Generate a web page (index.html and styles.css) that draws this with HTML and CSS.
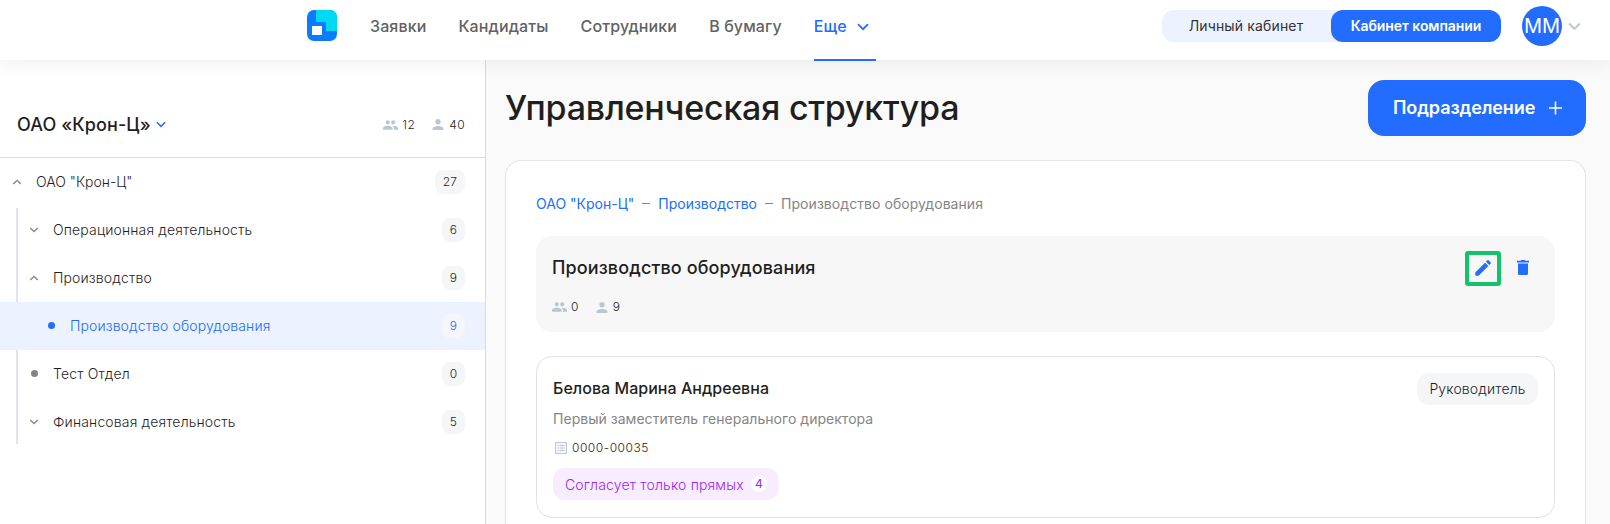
FILE: index.html
```html
<!DOCTYPE html>
<html lang="ru">
<head>
<meta charset="utf-8">
<title>Управленческая структура</title>
<link rel="stylesheet" href="styles.css">
</head>
<body>
<svg class="defs" width="0" height="0">
  <symbol id="down" viewBox="0 0 12 8"><path d="M1 1.2 6 6.2 11 1.2" fill="none" stroke="currentColor" stroke-width="1.8"/></symbol>
  <symbol id="group" viewBox="1 5 22 14"><path d="M16 11c1.66 0 2.99-1.34 2.99-3S17.66 5 16 5s-3 1.34-3 3 1.34 3 3 3zm-8 0c1.66 0 2.99-1.34 2.99-3S9.66 5 8 5 5 6.34 5 8s1.34 3 3 3zm0 2c-2.33 0-7 1.17-7 3.5V19h14v-2.5c0-2.33-4.67-3.5-7-3.5zm8 0c-.29 0-.62.02-.97.05 1.16.84 1.97 1.97 1.97 3.45V19h6v-2.5c0-2.33-4.67-3.5-7-3.5z" fill="currentColor"/></symbol>
  <symbol id="person" viewBox="4 4 16 16"><path d="M12 12c2.21 0 4-1.79 4-4s-1.79-4-4-4-4 1.79-4 4 1.790 4 4 4zm0 2c-2.67 0-8 1.340-8 4v2h16v-2c0-2.660-5.330-4-8-4z" fill="currentColor"/></symbol>
</svg>
<header class="header">
  <svg class="logo" viewBox="0 0 30 31"><rect width="30" height="31" rx="7" fill="#0a7aff"/><path d="M9 0h14a7 7 0 0 1 7 7v14H19v-9H9z" fill="#00d9f2"/><rect x="5" y="16" width="10" height="9" fill="#fff"/></svg>
  <nav class="nav">
    <a>Заявки</a><a>Кандидаты</a><a>Сотрудники</a><a>В бумагу</a>
    <a class="active">Еще <svg class="nav-chevron"><use href="#down"/></svg></a>
  </nav>
  <div class="switch"><span class="personal">Личный кабинет</span><span class="company">Кабинет компании</span></div>
  <div class="avatar">ММ</div>
  <svg class="user-chevron"><use href="#down"/></svg>
</header>
<div class="layout">
  <aside class="sidebar">
    <div class="side-head">
      <h2>ОАО «Крон-Ц»</h2><svg class="title-chevron"><use href="#down"/></svg>
      <div class="stats"><svg class="group"><use href="#group"/></svg><span>12</span><svg class="person"><use href="#person"/></svg><span>40</span></div>
    </div>
    <div class="row root"><span class="mark"><svg class="up"><use href="#down"/></svg></span><span class="name">ОАО "Крон-Ц"</span><span class="badge">27</span></div>
    <div class="tree">
      <div class="row"><span class="mark"><svg><use href="#down"/></svg></span><span class="name">Операционная деятельность</span><span class="badge">6</span></div>
      <div class="row"><span class="mark"><svg class="up"><use href="#down"/></svg></span><span class="name">Производство</span><span class="badge">9</span></div>
      <div class="row selected"><span class="mark"><i></i></span><span class="name">Производство оборудования</span><span class="badge">9</span></div>
      <div class="row"><span class="mark"><i></i></span><span class="name">Тест Отдел</span><span class="badge">0</span></div>
      <div class="row last"><span class="mark"><svg><use href="#down"/></svg></span><span class="name">Финансовая деятельность</span><span class="badge">5</span></div>
    </div>
  </aside>
  <main class="main">
    <div class="page-head">
      <h1>Управленческая структура</h1>
      <button class="add">Подразделение<svg viewBox="0 0 14 14"><path d="M7 0v14M0 7h14" stroke="#fff" stroke-width="1.7"/></svg></button>
    </div>
    <section class="panel">
      <div class="crumbs"><a>ОАО "Крон-Ц"</a><i></i><a>Производство</a><i></i><span>Производство оборудования</span></div>
      <div class="unit">
        <div>
          <h3>Производство оборудования</h3>
          <div class="stats"><svg class="group"><use href="#group"/></svg><span>0</span><svg class="person"><use href="#person"/></svg><span>9</span></div>
        </div>
        <div class="actions">
          <span class="edit"><svg viewBox="3 3 18 18"><path d="M3.600 16.700 14.300 6l3.700 3.700L7.300 20.400Q7 20.700 6.500 20.700H4.200q-.9 0-.9-.9v-2.300q0-.5.3-.8zM20.500 7.200c.5-.5.5-1.200 0-1.700l-2-2c-.5-.5-1.200-.5-1.700 0l-1.500 1.500 3.700 3.700z" fill="currentColor"/></svg></span>
          <svg class="trash" viewBox="0 0 12 15"><path d="M1 3.500h10v10q0 1.500-1.500 1.500h-7Q1 15 1 13.500zM0 .800h3.500L4.300 0h3.400l.8.800H12v1.600H0z" fill="currentColor"/></svg>
        </div>
      </div>
      <article class="employee">
        <div class="employee-head"><h4>Белова Марина Андреевна</h4><span class="role">Руководитель</span></div>
        <p class="position">Первый заместитель генерального директора</p>
        <div class="number"><svg viewBox="0 0 12 12"><path d="M.5.500h11v11H.5z" fill="#f3f6fa" stroke="#b8c6d5"/><path d="M2.500 3.500h1m1 0h5m-7 2.500h1m1 0h5m-7 2.500h1m1 0h5" stroke="#b8c6d5"/></svg>0000-00035</div>
        <div class="approval">Согласует только прямых<b>4</b></div>
      </article>
    </section>
  </main>
</div>
</body>
</html>
```
FILE: styles.css
```css
* { box-sizing: border-box; }
body { margin: 0; height: 524px; overflow: hidden; background: #fff; color: #1f1f1f; font-family: Inter, sans-serif; font-size: 14px; }
h1, h2, h3, h4, p { margin: 0; font-weight: 500; }
svg { display: block; flex: none; }
.defs { position: absolute; }

.header { position: relative; z-index: 1; display: flex; align-items: flex-start; height: 60px; padding: 0 29px 0 307px; background: #fff; box-shadow: 0 0 20px 2px rgba(0,0,0,.07); }
.logo { width: 30px; height: 31px; margin: 10px 33px 0 0; }
.nav { display: flex; gap: 32px; height: 61px; color: #626262; font-size: 16px; font-weight: 500; line-height: 52px; letter-spacing: .12px; white-space: nowrap; }
.active { display: flex; width: 62px; color: #226dff; border-bottom: 2px solid #226dff; }
.nav-chevron { width: 12px; height: 8px; margin: 23px 0 0 10px; }
.switch { display: flex; margin: 10px 0 0 auto; width: 339px; height: 32px; border-radius: 12px; background: #ecf2ff; line-height: 32px; text-align: center; white-space: nowrap; }
.personal { width: 169px; padding-right: 1px; color: #333; letter-spacing: .15px; }
.company { width: 170px; border-radius: 12px; background: #226dff; color: #fff; font-weight: 600; letter-spacing: -.08px; }
.avatar { width: 40px; height: 40px; margin: 6px 6px 0 21px; border-radius: 50%; background: #226dff; color: #fff; font-size: 20px; line-height: 40px; text-align: center; }
.user-chevron { width: 13px; height: 9px; margin-top: 22px; color: #bac6d3; }

.layout { display: flex; height: 464px; }
.sidebar { width: 486px; flex: none; border-right: 1px solid #dadbdd; }
.side-head { display: flex; align-items: center; height: 98px; padding: 32px 20px 0 17px; border-bottom: 1px solid #dadde0; }
h2 { font-size: 18px; line-height: 24px; letter-spacing: .1px; }
.title-chevron { width: 10px; height: 7px; margin-left: 5px; color: #226dff; }
.stats { display: flex; align-items: center; font-size: 12px; font-weight: 300; line-height: 16px; color: #1f1f1f; letter-spacing: .4px; }
.side-head .stats { margin-left: auto; }
.stats svg { color: #b9c6d3; }
.group { width: 15px; height: 10px; margin-right: 4px; }
.person { width: 12px; height: 11px; margin: 0 5px 0 17px; }
.row { display: flex; align-items: center; height: 48px; padding: 0 20px 1px 27px; font-weight: 300; letter-spacing: .15px; }
.root { padding-left: 10px; letter-spacing: 0; }
.mark { display: flex; justify-content: center; width: 14px; margin-right: 12px; color: #858585; }
.mark svg { width: 10px; height: 6px; }
.up { transform: rotate(180deg); }
.mark i { width: 7px; height: 7px; border-radius: 50%; background: currentColor; }
.badge { min-width: 23px; height: 24px; margin: 1px 0 0 auto; padding: 0 7px; border-radius: 8px; background: #f4f6f8; font-size: 12px; letter-spacing: .3px; line-height: 23px; text-align: center; }
.root .badge { width: 30px; }
.tree .row { background: linear-gradient(#e0e5ea, #e0e5ea) 16px 0 / 2px 48px no-repeat; }
.tree .row:first-child { background-position: 16px 2px; }
.tree .row.last { background-size: 2px 46px; }
.tree .row.selected { padding-left: 44px; background: #ecf2ff; color: #226dff; }
.selected .name { letter-spacing: .12px; }
.selected .mark { color: #226dff; }

.main { flex: 1; display: flex; flex-direction: column; padding: 20px 24px 0 19px; background: #fafafa; }
.page-head { display: flex; justify-content: space-between; height: 80px; flex: none; }
h1 { font-size: 34px; line-height: 55px; letter-spacing: -.22px; }
.add { display: flex; align-items: center; justify-content: space-between; width: 218px; height: 56px; padding: 0 24px 1px 25px; border: 0; border-radius: 16px; background: #226dff; color: #fff; font: 600 18px Inter, sans-serif; letter-spacing: -.1px; }
.add svg { width: 13px; height: 14px; }
.panel { flex: 1; padding: 32px 30px 0; border: 1px solid #e2e4e7; border-bottom: 0; border-radius: 16px 16px 0 0; background: #fff; }
.crumbs { display: flex; align-items: center; height: 21px; margin-bottom: 22px; color: #858585; }
.crumbs span { letter-spacing: .06px; }
.crumbs a { color: #226dff; }
.crumbs i { width: 8px; height: 1px; margin: 0 8px; background: #858585; }
.unit { display: flex; justify-content: space-between; height: 96px; padding: 19px 26px 0 16px; border-radius: 16px; background: #f7f7f7; }
h3 { font-size: 18px; line-height: 25px; letter-spacing: .12px; }
.unit .stats { margin-top: 19px; }
.actions { display: flex; align-items: flex-start; color: #226dff; margin-top: -4px; }
.edit { width: 36px; height: 35px; padding: 5px 6px; border: 4px solid #13c26b; border-radius: 3px; }
.edit svg { width: 16px; height: 16px; }
.trash { width: 12px; height: 15px; margin: 9px 0 0 16px; }
.employee { margin-top: 24px; height: 162px; padding: 16px; border: 1px solid #e0e2e7; border-radius: 16px; }
.employee-head { display: flex; justify-content: space-between; height: 32px; line-height: 31px; }
h4 { font-size: 16px; letter-spacing: .04px; }
.role { width: 121px; border-radius: 12px; background: #f4f6f8; text-align: center; font-weight: 300; letter-spacing: .15px; }
.position { margin-top: 4px; color: #858585; font-weight: 400; line-height: 20px; letter-spacing: .03px; }
.number { display: flex; align-items: center; margin: 11px 0 12px 2px; font-size: 12px; font-weight: 300; line-height: 16px; letter-spacing: .52px; }
.number svg { width: 12px; height: 12px; margin-right: 5px; }
.approval { display: flex; align-items: center; justify-content: space-between; width: 226px; height: 32px; padding: 0 12px; border-radius: 12px; background: #f8ecff; color: #9b26f5; font-weight: 300; letter-spacing: .18px; white-space: nowrap; }
.approval b { width: 16px; height: 16px; border-radius: 50%; background: #fff; font-size: 12px; font-weight: 400; letter-spacing: 0; line-height: 16px; text-align: center; }
```
